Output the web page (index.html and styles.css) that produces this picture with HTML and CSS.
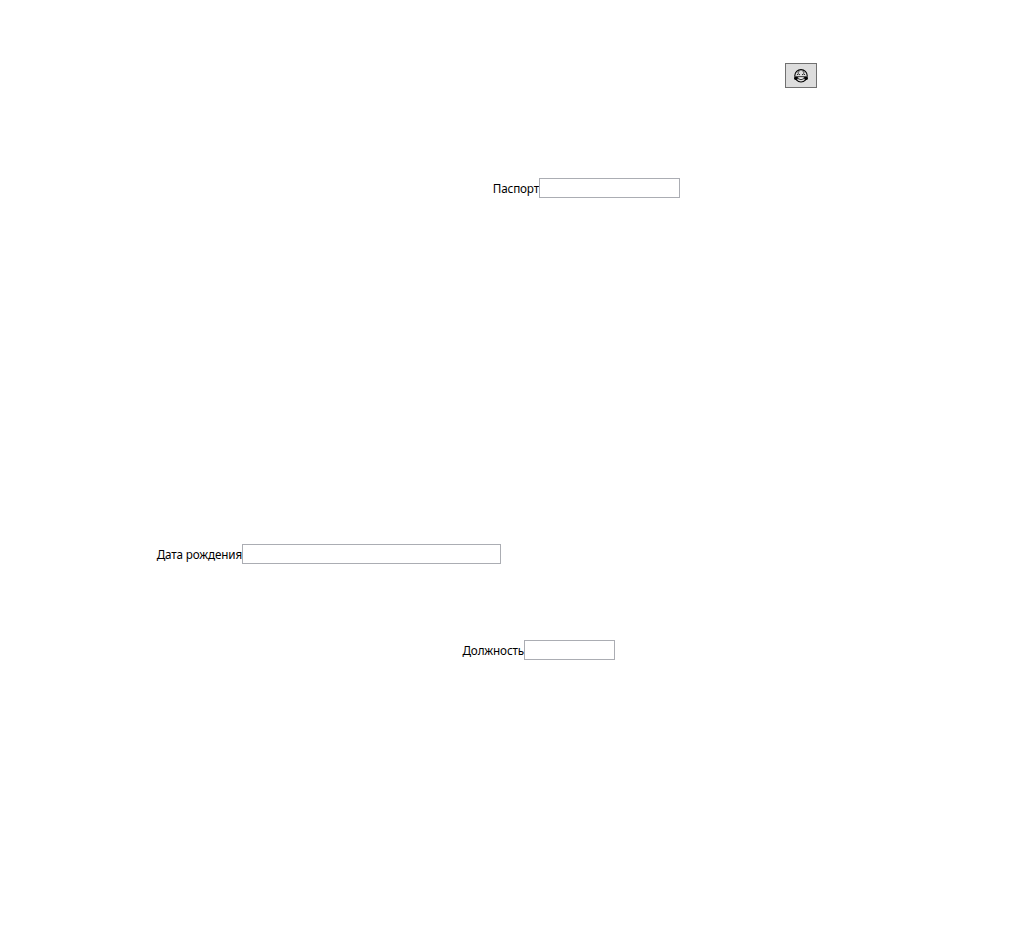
FILE: index.html
```html
<!DOCTYPE html>
<html lang="ru">
<head>
<meta charset="utf-8">
<title>Форма</title>
<link rel="stylesheet" href="styles.css">
</head>
<body>
<form class="form">
  <button class="emoji-button" type="button" aria-label="Смех">
    <svg class="emoji" viewBox="0 0 16 15" width="16" height="15">
      <circle cx="8" cy="7.8" r="6.2" fill="none" stroke="#000" stroke-width="1.1"/>
      <path d="M3.9 6.8Q5.2 4.8 6.9 6.8M9.1 6.8Q10.8 4.8 12.1 6.8M4.7 4.4L6.3 3.6M9.7 3.6L11.3 4.4" fill="none" stroke="#000" stroke-width=".9"/>
      <path d="M4.4 8.7H11.6Q11.4 11.6 8 11.6Q4.6 11.6 4.4 8.7Z" fill="#f0f0f0" stroke="#000" stroke-width=".8"/>
      <path d="M4.2 8.2Q.9 8.8 1 10.4Q1.4 12.4 3.6 12Q5 11.4 4.9 10ZM11.8 8.2Q15.1 8.8 15 10.4Q14.6 12.4 12.4 12Q11 11.4 11.1 10Z"/>
    </svg>
  </button>
  <div class="field passport">
    <label class="label" for="passport">Паспорт</label>
    <input class="input" id="passport" type="text">
  </div>
  <div class="field birthday">
    <label class="label" for="birthday">Дата рождения</label>
    <input class="input" id="birthday" type="text">
  </div>
  <div class="field position">
    <label class="label" for="position">Должность</label>
    <input class="input" id="position" type="text">
  </div>
</form>
</body>
</html>
```
FILE: styles.css
```css
* { box-sizing: border-box; }
body {
  margin: 0;
  background: #fff;
  color: #000;
  font: 11.7px/16px "Noto Sans", "Open Sans", sans-serif;
}
.form {
  display: flex;
  flex-direction: column;
  align-items: flex-start;
  min-height: 939px;
  padding-top: 63px;
}
.emoji-button {
  display: flex;
  align-items: center;
  justify-content: center;
  width: 32px;
  height: 25px;
  margin-left: 785px;
  padding: 0;
  border: 1px solid #707070;
  background: #ddd;
}
.emoji { display: block; }
.field {
  display: flex;
  height: 20px;
}
.label {
  display: flex;
  justify-content: flex-end;
  padding-top: 2px;
  letter-spacing: -0.15px;
  white-space: nowrap;
}
.input {
  height: 20px;
  margin: 0;
  padding: 0 3px;
  border: 1px solid #abadb3;
  border-radius: 0;
  background: #fff;
  font: inherit;
}
.passport { margin-top: 90px; }
.passport .label { width: 539px; }
.passport .input { width: 141px; }
.birthday { margin-top: 346px; }
.birthday .label { width: 242px; }
.birthday .input { width: 259px; }
.position { margin-top: 76px; }
.position .label { width: 524px; }
.position .input { width: 91px; }
```
